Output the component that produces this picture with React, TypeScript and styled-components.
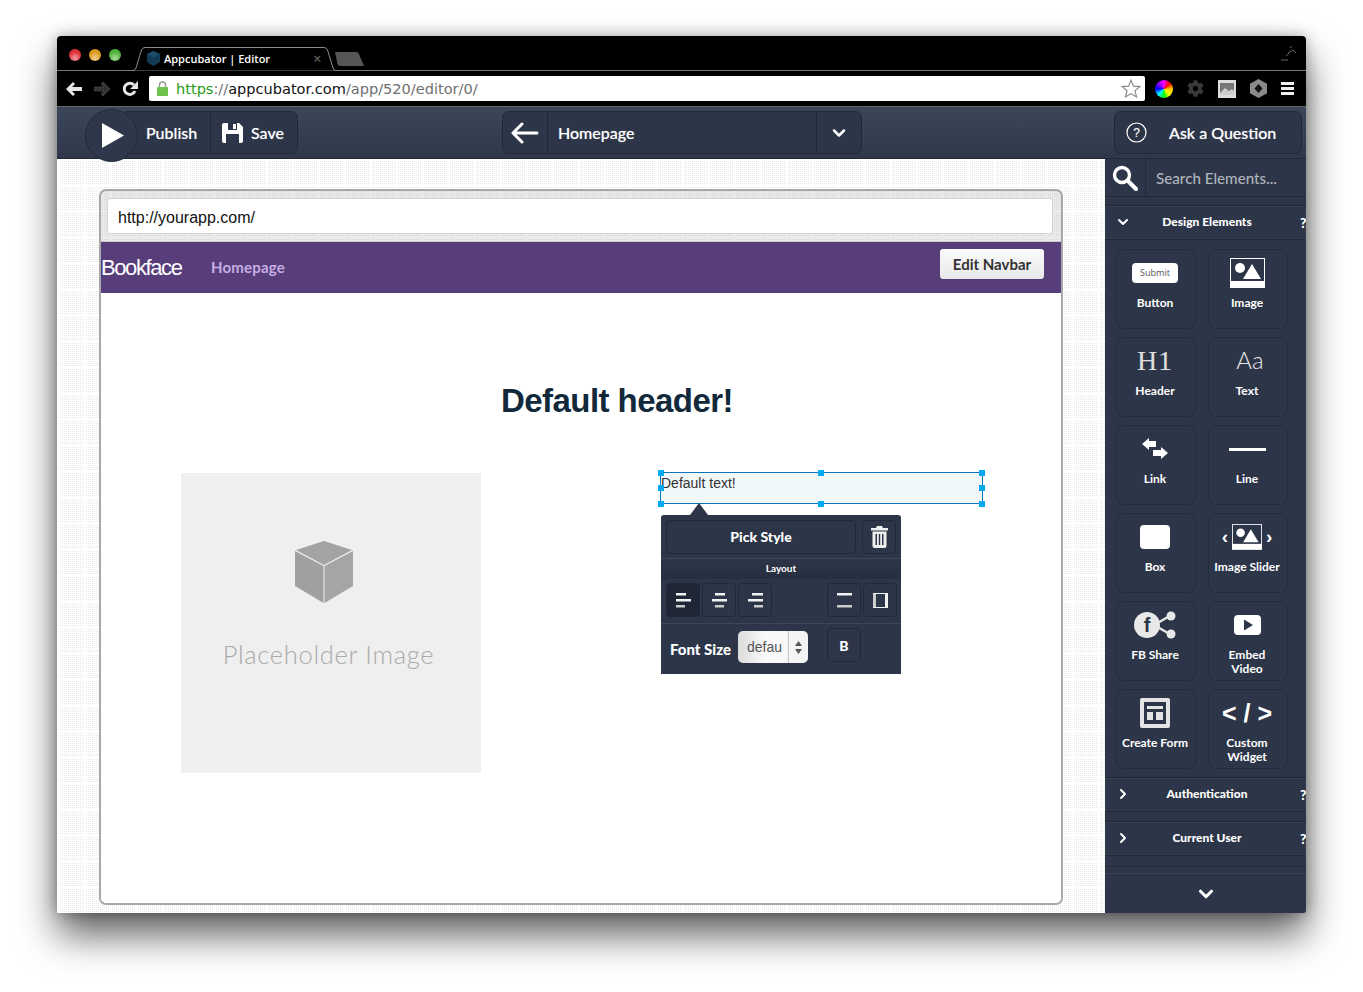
import React from "react"
import styled, { createGlobalStyle } from "styled-components"
import { ChevronDown, ChevronRight } from "lucide-react"
import { FaCog } from "react-icons/fa"

const UI = `Lato, "Open Sans", sans-serif`
const PANEL = "#2d3648"
const EDGE = "#212939"

const Global = createGlobalStyle`
  html, body { margin: 0; padding: 0; background: #fff; }
  * { box-sizing: border-box; }
`

const Page = styled.div`
  width: 1363px;
  height: 992px;
  padding: 36px 57px 0;
  overflow: hidden;
  background: #fff;
`

const Window = styled.div`
  width: 1249px;
  height: 877px;
  display: flex;
  flex-direction: column;
  border-radius: 4px 4px 2px 2px;
  overflow: hidden;
  box-shadow: 0 22px 38px rgba(0, 0, 0, 0.62), 0 0 14px rgba(0, 0, 0, 0.3);
  font-family: ${UI};
`

/* browser chrome */
const TabStrip = styled.div`
  height: 35px;
  flex: none;
  background: #000;
  position: relative;
  display: flex;
  align-items: center;
  padding-left: 12px;
  border-bottom: 1px solid #777;
`

const Light = styled.span<{ $c: string }>`
  width: 12px;
  height: 12px;
  border-radius: 50%;
  margin-right: 8px;
  margin-top: 3px;
  background: radial-gradient(circle at 50% 75%, #fff8 0, transparent 55%), ${(p) => p.$c};
`

const TabShape = styled.svg`
  position: absolute;
  left: 75px;
  top: 11px;
`

const TabBody = styled.div`
  position: absolute;
  left: 90px;
  top: 10px;
  width: 180px;
  height: 24px;
  display: flex;
  align-items: center;
  gap: 4px;
  color: #fff;
  font: 600 11px "Open Sans", sans-serif;
`

const TabClose = styled.span`
  margin-left: auto;
  color: #555;
  font: 700 13px "Liberation Sans", sans-serif;
  margin-right: 6px;
`

const NewTab = styled.svg`
  position: absolute;
  left: 277px;
  top: 16px;
`

const Resize = styled.svg`
  position: absolute;
  right: 9px;
  top: 10px;
`

const NavBar = styled.div`
  height: 36px;
  flex: none;
  background: #000;
  display: flex;
  align-items: center;
  padding-left: 9px;
  border-bottom: 1px solid #666;
`

const NavIcons = styled.div`
  display: flex;
  align-items: center;
  gap: 12px;
  width: 83px;
`

const Omnibox = styled.div`
  width: 996px;
  height: 25px;
  background: #fff;
  border-radius: 2px;
  display: flex;
  align-items: center;
  padding: 0 4px 0 8px;
  font: 14.55px "DejaVu Sans", sans-serif;
  color: #6f6f6f;
  white-space: nowrap;
`

const UrlGreen = styled.span`
  color: #1f9e16;
  margin-left: 8px;
`

const UrlDark = styled.span`
  color: #111;
`

const Star = styled.svg`
  margin-left: auto;
`

const Extensions = styled.div`
  display: flex;
  align-items: center;
  gap: 14px;
  margin-left: 10px;
`

const ColorWheel = styled.span`
  width: 18px;
  height: 18px;
  border-radius: 50%;
  background: conic-gradient(#f0f, #f00, #fc0, #ff0, #0f0, #0ff, #00f, #80f, #f0f);
`

const Burger = styled.div`
  width: 13px;
  display: flex;
  flex-direction: column;
  gap: 2px;
`

const BurgerBar = styled.span`
  height: 3px;
  background: #eee;
`

/* app toolbar */
const Toolbar = styled.div`
  height: 52px;
  flex: none;
  display: flex;
  align-items: center;
  background: linear-gradient(#3b4759, #2f384a);
  border-bottom: 1px solid ${EDGE};
  position: relative;
  z-index: 2;
`

const Group = styled.div<{ $w: number; $ml: number }>`
  width: ${(p) => p.$w}px;
  margin-left: ${(p) => p.$ml}px;
  height: 43px;
  display: flex;
  align-items: stretch;
  background: ${PANEL};
  border: 1px solid ${EDGE};
  border-radius: 7px;
  color: #fff;
  font-size: 16px;
  font-weight: 500;
  text-shadow: 0 0 1px rgba(255, 255, 255, 0.45);
  position: relative;
`

const Cell = styled.div<{ $w?: number; $pl?: number; $center?: boolean }>`
  ${(p) => (p.$w ? `width: ${p.$w}px; flex: none;` : "flex: 1;")}
  padding-left: ${(p) => p.$pl ?? 0}px;
  display: flex;
  align-items: center;
  justify-content: ${(p) => (p.$center ? "center" : "flex-start")};
  gap: 8px;
  border-right: 1px solid ${EDGE};
  &:last-child { border-right: none; }
`

const AskLabel = styled.span`
  margin-left: 14px;
`

const PlayButton = styled.div`
  position: absolute;
  left: -36px;
  top: -3px;
  width: 53px;
  height: 53px;
  border-radius: 50%;
  background: #2f384b;
  border: 1px solid ${EDGE};
  display: flex;
  align-items: center;
  justify-content: center;
  padding-left: 3px;
`

/* editor body */
const Body = styled.div`
  flex: 1;
  min-height: 0;
  display: flex;
`

const Canvas = styled.div`
  flex: 1;
  min-width: 0;
  padding: 30px 42px 8px;
  background-color: #fff;
  background-image:
    linear-gradient(#fff 2px, transparent 2px),
    linear-gradient(90deg, #fff 2px, transparent 2px),
    conic-gradient(#e9e9e9 25%, #fff 0);
  background-size: 26px 26px, 26px 26px, 2px 2px;
  background-position: 0 0, 0 0, 0 0;
`

const Frame = styled.div`
  height: 100%;
  width: 964px;
  display: flex;
  flex-direction: column;
  border: 2px solid #a8a8a8;
  border-radius: 7px;
  background: rgba(0, 0, 0, 0.08);
  overflow: hidden;
`

const AddressWrap = styled.div`
  height: 51px;
  flex: none;
  padding: 7px 8px 8px 6px;
  border-bottom: 1px solid #c8c8c8;
`

const AddressField = styled.div`
  height: 36px;
  background: #fff;
  border: 1px solid #d4d4d4;
  border-radius: 3px;
  padding: 3px 0 0 10px;
  display: flex;
  align-items: center;
  font: 16px "Liberation Sans", sans-serif;
  color: #111;
`

const AppNav = styled.div`
  height: 51px;
  flex: none;
  background: #573e7b;
  display: flex;
  align-items: center;
  font-family: "Liberation Sans", sans-serif;
`

const Brand = styled.span`
  color: #fff;
  font-size: 22px;
  letter-spacing: -1.4px;
  width: 110px;
`

const NavLink = styled.span`
  color: #c6aee2;
  font: 700 15px ${UI};
  letter-spacing: 0.2px;
  padding-bottom: 2px;
`

const EditNavbar = styled.div`
  margin: 0 17px 8px auto;
  width: 104px;
  height: 30px;
  border-radius: 3px;
  background: linear-gradient(#fbfbfb, #e8e8e8);
  color: #333;
  font: 700 15px ${UI};
  display: flex;
  align-items: center;
  justify-content: center;
`

const Stage = styled.div`
  flex: 1;
  position: relative;
  background: #fff;
`

const Heading = styled.h1`
  position: absolute;
  left: 400px;
  top: 88px;
  width: 233px;
  margin: 0;
  white-space: nowrap;
  font: 700 33px/40px "Liberation Sans", sans-serif;
  letter-spacing: -0.55px;
  color: #12293c;
`

const Placeholder = styled.div`
  position: absolute;
  left: 80px;
  top: 180px;
  width: 300px;
  height: 300px;
  background: #efefef;
  display: flex;
  flex-direction: column;
  align-items: center;
  padding-top: 67px;
`

const CubeIcon = styled.svg`
  margin-right: 14px;
  flex: none;
`

const PlaceholderText = styled.div`
  margin-top: 36px;
  margin-right: 5px;
  font: 300 25.5px Lato, sans-serif;
  letter-spacing: 0.7px;
  color: #aaa;
`

const TextBox = styled.div`
  position: absolute;
  left: 559px;
  top: 179px;
  width: 323px;
  height: 32px;
  border: 1px solid #0b76bf;
  background: #f1f8fb;
  font: 14px/20px "Liberation Sans", sans-serif;
  color: #333;
`

const Handle = styled.span<{ $x: number; $y: number }>`
  position: absolute;
  left: ${(p) => p.$x}px;
  top: ${(p) => p.$y}px;
  width: 6px;
  height: 6px;
  background: #00a9f1;
`

const Popover = styled.div`
  position: absolute;
  left: 560px;
  top: 222px;
  width: 240px;
  height: 159px;
  background: ${PANEL};
  border-radius: 3px 3px 0 0;
  color: #fff;
  font-family: ${UI};
  display: flex;
  flex-direction: column;
`

const Caret = styled.span`
  position: absolute;
  left: 29px;
  top: -12px;
  border-left: 9px solid transparent;
  border-right: 9px solid transparent;
  border-bottom: 12px solid ${PANEL};
`

const PopRow = styled.div`
  display: flex;
  align-items: center;
  padding: 0 5px;
  gap: 6px;
`

const StyleRow = styled(PopRow)`
  height: 44px;
  border-bottom: 1px solid #3d475a;
`

const LayoutRow = styled.div`
  height: 20px;
  padding-bottom: 2px;
  background: linear-gradient(#2d3648, #262e3f);
  font-size: 10px;
  font-weight: 700;
  display: flex;
  align-items: center;
  justify-content: center;
`

const AlignRow = styled(PopRow)`
  height: 45px;
  gap: 2px;
  padding-bottom: 2px;
  border-bottom: 1px solid #3d475a;
`

const FontRow = styled(PopRow)`
  flex: 1;
  padding: 4px 0 0 9px;
  gap: 0;
  align-items: flex-start;
`

const PopButton = styled.div<{ $w?: number; $active?: boolean; $ml?: number }>`
  width: ${(p) => p.$w ?? 34}px;
  height: 34px;
  flex: none;
  margin-left: ${(p) => p.$ml ?? 0}px;
  background: ${(p) => (p.$active ? "#1f2737" : PANEL)};
  border: 1px solid ${EDGE};
  border-radius: 4px;
  display: flex;
  align-items: center;
  justify-content: center;
  font-size: 14px;
  font-weight: 900;
`

const AlignIcon = styled.svg`
  display: block;
`

const FontLabel = styled.span`
  font-size: 15px;
  font-weight: 900;
  width: 68px;
  padding-top: 12px;
`

const FontSelect = styled.div`
  width: 70px;
  height: 32px;
  margin: 3px 19px 0 0;
  border-radius: 5px;
  background: linear-gradient(90deg, #dcdcdc, #fafafa 40%, #f2f2f2);
  color: #555;
  font: 14px "Liberation Sans", sans-serif;
  display: flex;
  align-items: center;
  padding-left: 9px;
`

const SelectArrows = styled.span`
  margin-left: auto;
  width: 20px;
  height: 100%;
  border-left: 1px solid #c4c4c4;
  display: flex;
  align-items: center;
  justify-content: center;
`

/* element sidebar */
const Sidebar = styled.div`
  width: 201px;
  flex: none;
  background: ${PANEL};
  display: flex;
  flex-direction: column;
  overflow: hidden;
  color: #fff;
`

const SearchRow = styled.div`
  height: 38px;
  flex: none;
  display: flex;
  align-items: center;
  border-bottom: 1px solid ${EDGE};
  margin-bottom: 8px;
`

const SearchIcon = styled.div`
  width: 41px;
  height: 100%;
  flex: none;
  display: flex;
  align-items: center;
  justify-content: center;
  border-right: 1px solid ${EDGE};
`

const SearchText = styled.span`
  margin-left: 10px;
  color: #b0b4bb;
  font-size: 15.2px;
  font-weight: 500;
`

const Section = styled.div<{ $mb: number }>`
  height: 35px;
  flex: none;
  display: flex;
  align-items: center;
  position: relative;
  justify-content: center;
  border-top: 1px solid ${EDGE};
  border-bottom: 1px solid ${EDGE};
  box-shadow: inset 0 0 0 1px #343e51;
  margin-bottom: ${(p) => p.$mb}px;
  font-size: 12px;
  font-weight: 900;
  padding: 0 0 2px 3px;
`

const SectionChevron = styled.span`
  position: absolute;
  left: 10px;
  top: 8px;
  line-height: 0;
`

const SectionHelp = styled.span`
  position: absolute;
  left: 195px;
  top: 8px;
  font-size: 14px;
`

const SectionStub = styled.div`
  flex: 1;
  border-top: 1px solid ${EDGE};
  box-shadow: inset 0 1px 0 #343e51;
`

const TileGrid = styled.div`
  display: grid;
  grid-template-columns: 80px 80px;
  grid-auto-rows: 80px;
  gap: 8px 12px;
  padding: 9px 0 8px 11px;
`

const TileBox = styled.div`
  border: 1px solid #252d3d;
  border-radius: 7px;
  padding-right: 2px;
  display: flex;
  flex-direction: column;
  align-items: center;
  text-align: center;
`

const TileIcon = styled.div`
  height: 46px;
  flex: none;
  display: flex;
  align-items: center;
  justify-content: center;
`

const TileLabel = styled.div`
  font-size: 12px;
  font-weight: 700;
  line-height: 14px;
`

const SubmitChip = styled.div`
  width: 46px;
  height: 20px;
  background: #fff;
  border-radius: 4px;
  color: #555;
  font: 9px/20px "Open Sans", sans-serif;
`

const SlabGlyph = styled.span`
  font: 28px "Liberation Serif", serif;
  letter-spacing: 1px;
  color: #e0e0e0;
`

const LightGlyph = styled.span`
  font: 300 24px Lato, sans-serif;
  color: #e6e6e6;
  margin: 0 0 3px 6px;
`

const CodeGlyph = styled.span`
  font: 700 25px "Liberation Sans", sans-serif;
`

const WhiteBox = styled.div`
  width: 30px;
  height: 24px;
  border-radius: 4px;
  background: #fff;
`

const SliderIcon = styled.div`
  display: flex;
  align-items: center;
  gap: 4px;
  font: 700 19px "Liberation Sans", sans-serif;
`

const Footer = styled.div`
  height: 40px;
  flex: none;
  border-top: 1px solid #3a4456;
  display: flex;
  align-items: center;
  justify-content: center;
`

const ImageGlyph = ({ w = 35, h = 30 }: { w?: number; h?: number }) => (
  <svg width={w} height={h} viewBox="0 0 35 30">
    <rect width="35" height="30" fill="#fff" />
    <rect x="1" y="1" width="33" height="22" fill="#2d3648" />
    <circle cx="10" cy="10" r="5" fill="#fff" />
    <path d="M13 21 L22 6 L31 21 Z" fill="#fff" />
  </svg>
)

const alignBars = {
  l: { top: [0, 10], mid: [0, 15], low: [0, 9] },
  c: { top: [3, 10], mid: [0, 15], low: [3, 9] },
  r: { top: [4, 11], mid: [0, 15], low: [6, 9] },
}

const AlignGlyph = ({ kind }: { kind: "l" | "c" | "r" }) => {
  const b = alignBars[kind]
  return (
    <AlignIcon width="15" height="15" viewBox="0 0 15 15" fill="#f2f2f2">
      <rect x={b.top[0]} y="0" width={b.top[1]} height="2.5" />
      <rect x={b.mid[0]} y="6" width={b.mid[1]} height="2.5" />
      <rect x={b.low[0]} y="12" width={b.low[1]} height="2.5" fill="#ccc" />
    </AlignIcon>
  )
}

const tiles: { label: React.ReactNode; icon: React.ReactNode }[] = [
  { label: "Button", icon: <SubmitChip>Submit</SubmitChip> },
  { label: "Image", icon: <ImageGlyph /> },
  { label: "Header", icon: <SlabGlyph>H1</SlabGlyph> },
  { label: "Text", icon: <LightGlyph>Aa</LightGlyph> },
  {
    label: "Link",
    icon: (
      <svg width="26" height="22" viewBox="0 0 26 22" fill="#fff">
        <path d="M0 6 L7 0 V3 H14 V9 H7 V12 Z" />
        <path d="M26 15 L19 9 V12 H11 V18 H19 V21 Z" />
      </svg>
    ),
  },
  {
    label: "Line",
    icon: (
      <svg width="37" height="3">
        <rect width="37" height="3" fill="#fff" />
      </svg>
    ),
  },
  { label: "Box", icon: <WhiteBox /> },
  {
    label: "Image Slider",
    icon: (
      <SliderIcon>
        ‹
        <ImageGlyph w={30} h={26} />
        ›
      </SliderIcon>
    ),
  },
  {
    label: "FB Share",
    icon: (
      <svg width="42" height="28" viewBox="0 0 42 28">
        <path d="M20 14 L34 6 M20 14 L34 22" stroke="#e8e8e8" strokeWidth="2.5" />
        <circle cx="37" cy="5" r="4.5" fill="#e8e8e8" />
        <circle cx="37" cy="23" r="4.5" fill="#e8e8e8" />
        <circle cx="13" cy="14" r="13" fill="#e8e8e8" />
        <text x="13" y="21" textAnchor="middle" fontFamily="Liberation Sans" fontWeight="700" fontSize="20" fill="#2d3648">f</text>
      </svg>
    ),
  },
  {
    label: (
      <>
        Embed
        <br />
        Video
      </>
    ),
    icon: (
      <svg width="27" height="20" viewBox="0 0 27 20">
        <rect width="27" height="20" rx="4" fill="#fff" />
        <path d="M10 4.5 L19 10 L10 15.5 Z" fill="#2d3648" />
      </svg>
    ),
  },
  {
    label: "Create Form",
    icon: (
      <svg width="30" height="30" viewBox="0 0 30 30">
        <rect width="30" height="30" rx="2" fill="#e4e4e4" />
        <rect x="4" y="4" width="22" height="22" fill="#2d3648" />
        <rect x="7" y="8" width="16" height="3" fill="#e4e4e4" />
        <rect x="7" y="14" width="6" height="8" fill="#e4e4e4" />
        <rect x="16" y="14" width="7" height="8" fill="#e4e4e4" />
      </svg>
    ),
  },
  {
    label: (
      <>
        Custom
        <br />
        Widget
      </>
    ),
    icon: <CodeGlyph>{"< / >"}</CodeGlyph>,
  },
]

const App = () => (
  <Page>
    <Global />
    <Window>
      <TabStrip>
        <Light $c="#e0323a" />
        <Light $c="#dd9a1e" />
        <Light $c="#4fb33a" />
        <TabShape width="206" height="24" viewBox="0 0 206 24">
          <path d="M0 23.5 H1 Q3 23.5 4 21 L9.500 3 Q10.500 0.500 13 0.500 H192 Q194.500 0.500 195.500 3 L201 21 Q202 23.500 204 23.500 H206" fill="#000" stroke="#8a8a8a" />
        </TabShape>
        <TabBody>
          <svg width="13" height="15" viewBox="0 0 13 15">
            <path d="M6.5 0 L13 3 V11 L6.5 15 L0 11 V3 Z" fill="#123a55" />
            <path d="M6.5 7 L13 3 L6.5 0 L0 3 Z" fill="#1d4a68" />
          </svg>
          Appcubator | Editor
          <TabClose>×</TabClose>
        </TabBody>
        <NewTab width="32" height="14" viewBox="0 0 32 14">
          <path d="M1 0 H22 Q24 0 25 2 L30 14 H6 Q4 14 3.5 12 Z" fill="#565656" />
        </NewTab>
        <Resize width="16" height="15" viewBox="0 0 16 15" fill="none" stroke="#666" strokeWidth="1">
          <path d="M0 14 H7 M7 7 L12 4 L15 7 M9 2 L11 0 M5 10 L8 7" />
        </Resize>
      </TabStrip>
      <NavBar>
        <NavIcons>
          <svg width="16" height="14" viewBox="0 0 16 14" fill="#e6e6e6">
            <path d="M7 0 L9 2 L6 5 H16 V9 H6 L9 12 L7 14 L0 7 Z" />
          </svg>
          <svg width="16" height="14" viewBox="0 0 16 14" fill="#333" stroke="#555" strokeWidth="0.6">
            <path d="M9 0 L7 2 L10 5 H0 V9 H10 L7 12 L9 14 L16 7 Z" />
          </svg>
          <svg width="16" height="16" viewBox="0 0 16 16" fill="none">
            <path d="M13 10 A5.6 5.6 0 1 1 12 4" stroke="#e6e6e6" strokeWidth="3" />
            <path d="M16 0 V8 H8 Z" fill="#e6e6e6" />
          </svg>
        </NavIcons>
        <Omnibox>
          <svg width="11" height="15" viewBox="0 0 11 15">
            <path d="M2.5 7 V4 A3 3 0 0 1 8.5 4 V7" fill="none" stroke="#999" strokeWidth="1.4" />
            <rect y="6" width="11" height="9" rx="1" fill="#6cc24a" />
          </svg>
          <UrlGreen>https</UrlGreen>://<UrlDark>appcubator.com</UrlDark>/app/520/editor/0/
          <Star width="20" height="19" viewBox="0 0 24 23" fill="#fff" stroke="#888" strokeWidth="1.4">
            <path d="M12 1.5 L15 8.6 L22.7 9.2 L16.8 14.2 L18.7 21.700 L12 17.700 L5.300 21.700 L7.200 14.200 L1.300 9.200 L9 8.600 Z" />
          </Star>
        </Omnibox>
        <Extensions>
          <ColorWheel />
          <FaCog size={17} color="#3a3a3a" />
          <svg width="18" height="18" viewBox="0 0 18 18">
            <rect width="18" height="18" fill="#ddd" />
            <rect x="2" y="3" width="14" height="12" fill="#777" />
            <path d="M2 13 L7 8 L11 11 L14 9 L16 11 V15 H2 Z" fill="#ccc" />
          </svg>
          <svg width="17" height="19" viewBox="0 0 17 19">
            <path d="M8.5 0 L17 4.700 V14.300 L8.500 19 L0 14.300 V4.700 Z" fill="#8a8a8a" />
            <path d="M8.500 5 L12.500 9.500 L8.500 14 L4.500 9.500 Z" fill="#111" />
          </svg>
          <Burger>
            <BurgerBar />
            <BurgerBar />
            <BurgerBar />
          </Burger>
        </Extensions>
      </NavBar>
      <Toolbar>
        <Group $w={178} $ml={63}>
          <PlayButton>
            <svg width="22" height="25" viewBox="0 0 22 25">
              <path d="M0 0 L22 12.500 L0 25 Z" fill="#fff" />
            </svg>
          </PlayButton>
          <Cell $w={90} $pl={25}>Publish</Cell>
          <Cell $pl={11}>
            <svg width="21" height="20" viewBox="0 0 21 20">
              <path d="M2 0 H17 L21 4 V18 A2 2 0 0 1 19 20 H2 A2 2 0 0 1 0 18 V2 A2 2 0 0 1 2 0 Z" fill="#fff" />
              <rect x="6" y="0" width="9" height="7" fill="#2d3648" />
              <rect x="11" y="1" width="3" height="5" fill="#fff" />
              <rect x="4" y="11" width="13" height="9" fill="#2d3648" />
            </svg>
            Save
          </Cell>
        </Group>
        <Group $w={360} $ml={204}>
          <Cell $w={45} $center>
            <svg width="28" height="22" viewBox="0 0 28 22" fill="none" stroke="#fff" strokeWidth="3" strokeLinecap="round" strokeLinejoin="round">
              <path d="M26 11 H3 M11 2 L2 11 L11 20" />
            </svg>
          </Cell>
          <Cell $pl={10}>Homepage</Cell>
          <Cell $w={44} $center>
            <ChevronDown size={20} color="#fff" strokeWidth={3} />
          </Cell>
        </Group>
        <Group $w={188} $ml={252}>
          <Cell $pl={11}>
            <svg width="21" height="21" viewBox="0 0 21 21">
              <circle cx="10.5" cy="10.5" r="9.5" fill="none" stroke="#fff" strokeWidth="1.2" />
              <text x="10.5" y="15" textAnchor="middle" fontSize="12" fill="#fff" fontFamily="Liberation Sans">?</text>
            </svg>
            <AskLabel>Ask a Question</AskLabel>
          </Cell>
        </Group>
      </Toolbar>
      <Body>
        <Canvas>
          <Frame>
            <AddressWrap>
              <AddressField>http://yourapp.com/</AddressField>
            </AddressWrap>
            <AppNav>
              <Brand>Bookface</Brand>
              <NavLink>Homepage</NavLink>
              <EditNavbar>Edit Navbar</EditNavbar>
            </AppNav>
            <Stage>
              <Heading>Default header!</Heading>
              <Placeholder>
                <CubeIcon width="58" height="63" viewBox="0 0 58 63">
                  <path d="M1 10 L29 1 L57 10 L29 25 Z" fill="#a3a3a3" />
                  <path d="M0 11 L28.500 26 V63 L0 46 Z" fill="#a0a0a0" />
                  <path d="M58 11 L29.500 26 V63 L58 46 Z" fill="#a5a5a5" />
                </CubeIcon>
                <PlaceholderText>Placeholder Image</PlaceholderText>
              </Placeholder>
              <TextBox>
                Default text!
                <Handle $x={-3} $y={-3} />
                <Handle $x={157} $y={-3} />
                <Handle $x={318} $y={-3} />
                <Handle $x={-3} $y={12} />
                <Handle $x={318} $y={12} />
                <Handle $x={-3} $y={28} />
                <Handle $x={157} $y={28} />
                <Handle $x={318} $y={28} />
              </TextBox>
              <Popover>
                <Caret />
                <StyleRow>
                  <PopButton $w={190}>Pick Style</PopButton>
                  <PopButton>
                    <svg width="17" height="22" viewBox="0 0 17 22" fill="#eee">
                      <path d="M6 0 H11 L12 2 H17 V4.500 H0 V2 H5 Z" />
                      <path d="M1.500 5.500 H15.500 V20 A2 2 0 0 1 13.500 22 H3.500 A2 2 0 0 1 1.500 20 Z M4.500 8 V19 H6 V8 Z M7.800 8 V19 H9.200 V8 Z M11 8 V19 H12.500 V8 Z" fillRule="evenodd" />
                    </svg>
                  </PopButton>
                </StyleRow>
                <LayoutRow>Layout</LayoutRow>
                <AlignRow>
                  <PopButton $active><AlignGlyph kind="l" /></PopButton>
                  <PopButton><AlignGlyph kind="c" /></PopButton>
                  <PopButton><AlignGlyph kind="r" /></PopButton>
                  <PopButton $ml={53}>
                    <svg width="15" height="15" viewBox="0 0 15 15" fill="#f2f2f2">
                      <rect width="15" height="2.5" />
                      <rect y="12" width="15" height="2.5" fill="#ccc" />
                    </svg>
                  </PopButton>
                  <PopButton>
                    <svg width="15" height="15" viewBox="0 0 15 15" fill="#f2f2f2">
                      <rect width="3" height="15" fill="#ccc" />
                      <rect x="12" width="3" height="15" />
                      <rect width="15" height="1" />
                      <rect y="14" width="15" height="1" />
                    </svg>
                  </PopButton>
                </AlignRow>
                <FontRow>
                  <FontLabel>Font Size</FontLabel>
                  <FontSelect>
                    defau
                    <SelectArrows>
                      <svg width="7" height="13" viewBox="0 0 7 13" fill="#555">
                        <path d="M3.5 0 L7 5 H0 Z M3.5 13 L0 8 H7 Z" />
                      </svg>
                    </SelectArrows>
                  </FontSelect>
                  <PopButton>B</PopButton>
                </FontRow>
              </Popover>
            </Stage>
          </Frame>
        </Canvas>
        <Sidebar>
          <SearchRow>
            <SearchIcon>
              <svg width="26" height="26" viewBox="0 0 26 26" fill="none" stroke="#fff">
                <circle cx="10" cy="10" r="7.5" strokeWidth="3.4" />
                <path d="M15.5 15.5 L24 24" strokeWidth="4" strokeLinecap="round" />
              </svg>
            </SearchIcon>
            <SearchText>Search Elements...</SearchText>
          </SearchRow>
          <Section $mb={0}>
            <SectionChevron><ChevronDown size={16} strokeWidth={3} /></SectionChevron>
            Design Elements
            <SectionHelp>?</SectionHelp>
          </Section>
          <TileGrid>
            {tiles.map((t, i) => (
              <TileBox key={i}>
                <TileIcon>{t.icon}</TileIcon>
                <TileLabel>{t.label}</TileLabel>
              </TileBox>
            ))}
          </TileGrid>
          <Section $mb={9}>
            <SectionChevron><ChevronRight size={16} strokeWidth={3} /></SectionChevron>
            Authentication
            <SectionHelp>?</SectionHelp>
          </Section>
          <Section $mb={10}>
            <SectionChevron><ChevronRight size={16} strokeWidth={3} /></SectionChevron>
            Current User
            <SectionHelp>?</SectionHelp>
          </Section>
          <SectionStub />
          <Footer>
            <ChevronDown size={22} strokeWidth={3.4} />
          </Footer>
        </Sidebar>
      </Body>
    </Window>
  </Page>
)

export default App
